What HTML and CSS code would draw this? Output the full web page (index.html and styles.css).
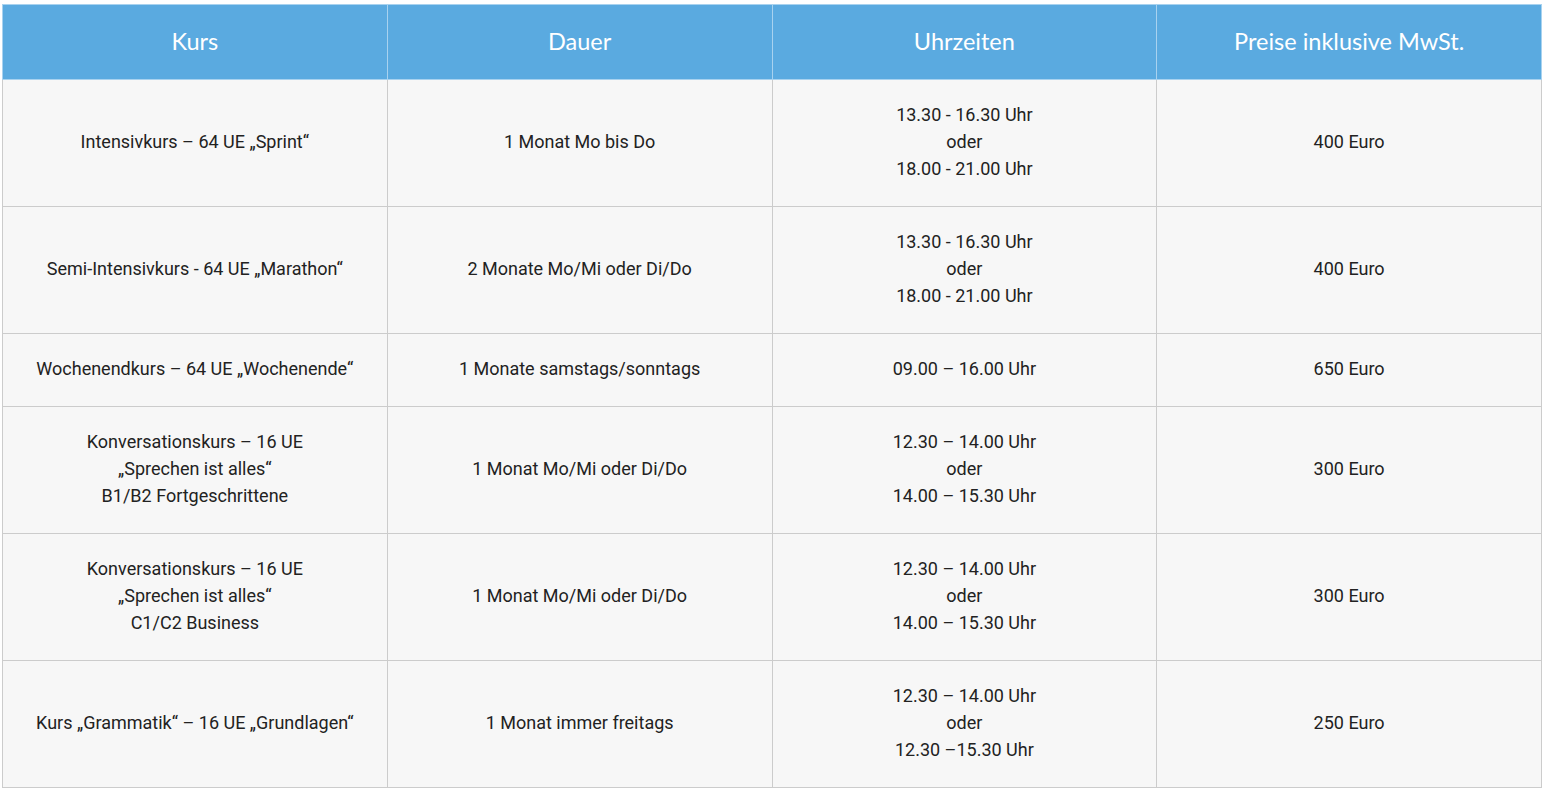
FILE: index.html
```html
<!DOCTYPE html>
<html lang="de">
<head>
<meta charset="utf-8">
<title>Kurse</title>
<link rel="stylesheet" href="styles.css">
</head>
<body>
<table class="price-table">
  <thead>
    <tr>
      <th>Kurs</th>
      <th>Dauer</th>
      <th>Uhrzeiten</th>
      <th>Preise inklusive MwSt.</th>
    </tr>
  </thead>
  <tbody>
    <tr>
      <td>Intensivkurs – 64 UE „Sprint“</td>
      <td>1 Monat Mo bis Do</td>
      <td>13.30 - 16.30 Uhr<br>oder<br>18.00 - 21.00 Uhr</td>
      <td>400 Euro</td>
    </tr>
    <tr>
      <td>Semi-Intensivkurs - 64 UE „Marathon“</td>
      <td>2 Monate Mo/Mi oder Di/Do</td>
      <td>13.30 - 16.30 Uhr<br>oder<br>18.00 - 21.00 Uhr</td>
      <td>400 Euro</td>
    </tr>
    <tr>
      <td>Wochenendkurs – 64 UE „Wochenende“</td>
      <td>1 Monate samstags/sonntags</td>
      <td>09.00 – 16.00 Uhr</td>
      <td>650 Euro</td>
    </tr>
    <tr>
      <td>Konversationskurs – 16 UE<br>„Sprechen ist alles“<br>B1/B2 Fortgeschrittene</td>
      <td>1 Monat Mo/Mi oder Di/Do</td>
      <td>12.30 – 14.00 Uhr<br>oder<br>14.00 – 15.30 Uhr</td>
      <td>300 Euro</td>
    </tr>
    <tr>
      <td>Konversationskurs – 16 UE<br>„Sprechen ist alles“<br>C1/C2 Business</td>
      <td>1 Monat Mo/Mi oder Di/Do</td>
      <td>12.30 – 14.00 Uhr<br>oder<br>14.00 – 15.30 Uhr</td>
      <td>300 Euro</td>
    </tr>
    <tr>
      <td>Kurs „Grammatik“ – 16 UE „Grundlagen“</td>
      <td>1 Monat immer freitags</td>
      <td>12.30 – 14.00 Uhr<br>oder<br>12.30 –15.30 Uhr</td>
      <td>250 Euro</td>
    </tr>
  </tbody>
</table>
</body>
</html>
```
FILE: styles.css
```css
html, body {
  background: #ffffff;
}
body {
  margin: 4px 2px 0 2px;
}
.price-table {
  width: 1540px;
  border-collapse: collapse;
  table-layout: fixed;
  font-family: Roboto, "Liberation Sans", sans-serif;
  font-size: 18px;
  line-height: 27px;
  color: #222222;
}
.price-table th {
  background: #5aaae0;
  color: #ffffff;
  font-family: Lato, "Open Sans", sans-serif;
  font-weight: 400;
  font-size: 23.5px;
  line-height: 28px;
  height: 71px;
  padding: 0 10px 3px;
  border: 1px solid #a8d2ef;
  text-align: center;
  vertical-align: middle;
}
.price-table td {
  background: #f7f7f7;
  border: 1px solid #cccccc;
  padding: 21px 10px 24px;
  text-align: center;
  vertical-align: middle;
}
```
